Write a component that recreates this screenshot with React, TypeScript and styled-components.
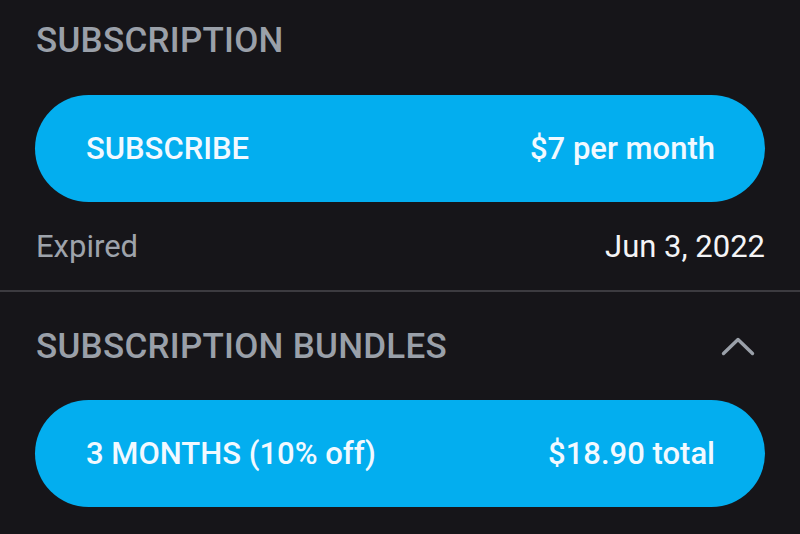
import styled, { createGlobalStyle } from 'styled-components';

const GlobalStyle = createGlobalStyle`
  html, body {
    margin: 0;
    padding: 0;
    background: #161519;
  }
  body {
    font-family: Roboto, 'Noto Sans', sans-serif;
  }
`;

interface PlanProps {
  label: string;
  price: string;
  gap?: number;
}

const PlanButton = (props: PlanProps) => (
  <Pill $gap={props.gap}>
    <span>{props.label}</span>
    <span>{props.price}</span>
  </Pill>
);

const ChevronUp = () => (
  <svg width="34" height="20" viewBox="0 0 34 20" fill="none">
    <polyline
      points="2.5,17.5 17,3.5 31.5,17.5"
      stroke="#9aa0a9"
      strokeWidth="3.4"
      strokeLinecap="round"
      strokeLinejoin="round"
    />
  </svg>
);

const App = () => {
  return (
    <Page>
      <GlobalStyle />
      <Section>
        <Heading>SUBSCRIPTION</Heading>
        <PlanButton label="SUBSCRIBE" price="$7 per month" />
        <InfoRow>
          <Muted>Expired</Muted>
          <Value>Jun 3, 2022</Value>
        </InfoRow>
      </Section>
      <Divider />
      <Section $top={36}>
        <HeaderRow>
          <Heading>SUBSCRIPTION BUNDLES</Heading>
          <ChevronUp />
        </HeaderRow>
        <PlanButton label="3 MONTHS (10% off)" price="$18.90 total" gap={34} />
      </Section>
    </Page>
  );
};

export default App;

const Page = styled.div`
  width: 800px;
  height: 534px;
  overflow: hidden;
  background: #161519;
  display: flex;
  flex-direction: column;
`;

const Section = styled.section<{ $top?: number }>`
  padding: ${(p) => p.$top ?? 22}px 35px 0 35px;
  display: flex;
  flex-direction: column;
`;

const Heading = styled.h2`
  margin: 0 0 0 1px;
  font-size: 35px;
  line-height: 38px;
  font-weight: 500;
  letter-spacing: 0.25px;
  color: #9aa0a9;
`;

const HeaderRow = styled.div`
  display: flex;
  align-items: center;
  justify-content: space-between;
  padding-right: 10px;

  svg {
    margin-top: -2px;
  }
`;

const Pill = styled.button<{ $gap?: number }>`
  margin-top: ${(p) => p.$gap ?? 35}px;
  height: 107px;
  border: none;
  border-radius: 54px;
  background: #03aeef;
  color: #f2f9ff;
  padding: 0 50px 0 51px;
  display: flex;
  align-items: center;
  justify-content: space-between;
  font-family: Roboto, 'Noto Sans', sans-serif;
  font-size: 31px;
  font-weight: 500;
  cursor: pointer;
`;

const InfoRow = styled.div`
  margin-top: 26px;
  display: flex;
  justify-content: space-between;
  align-items: center;
  font-size: 31px;
  line-height: 38px;
`;

const Muted = styled.span`
  color: #9ea3ab;
  margin-left: 1px;
`;

const Value = styled.span`
  color: #f4f4f6;
`;

const Divider = styled.hr`
  margin: 24px 0 0 0;
  border: none;
  height: 2px;
  background: #3c3b40;
`;
